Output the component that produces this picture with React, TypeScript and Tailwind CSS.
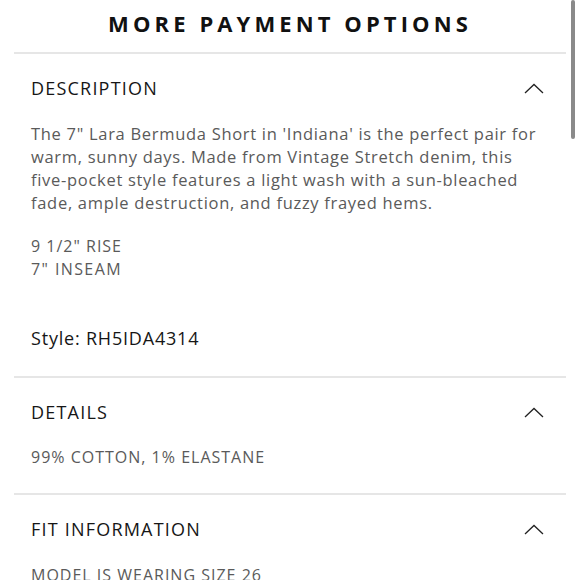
import { ReactNode } from "react";

const Chevron = () => (
  <svg width="20" height="11" viewBox="0 0 20 11" fill="none" className="shrink-0">
    <path d="M1 10L10 1.5L19 10" stroke="#222" strokeWidth="1.3" />
  </svg>
);

type SectionProps = {
  title: string;
  children: ReactNode;
};

const Section = ({ title, children }: SectionProps) => (
  <div className="border-t-2 border-[#e6e6e6] pl-[17px] pr-[22px]">
    <div className="flex items-center justify-between pt-[22px] h-[46px]">
      <h2 className="text-[18px] leading-[24px] text-[#161616] tracking-[1.2px]">{title}</h2>
      <Chevron />
    </div>
    <div className="pt-[22px] text-[16px] leading-[23px] text-[#5a5a5a] tracking-[1px]">{children}</div>
  </div>
);

export default function App() {
  return (
    <div className="relative w-[580px] h-[580px] overflow-hidden bg-white font-['Open_Sans','Liberation_Sans',sans-serif]">
      <div className="px-[14px]">
        <h1 className="h-[52px] flex items-center justify-center text-[22px] font-bold tracking-[4.1px] text-[#111] pb-[6px]">
          MORE PAYMENT OPTIONS
        </h1>

        <Section title="DESCRIPTION">
          <p className="w-[512px] text-[16.5px] tracking-[0.7px]">
            The 7" Lara Bermuda Short in 'Indiana' is the perfect pair for warm, sunny days. Made from Vintage
            Stretch denim, this five-pocket style features a light wash with a sun-bleached fade, ample
            destruction, and fuzzy frayed hems.
          </p>
          <p className="mt-[21px]">
            9 1/2" RISE
            <br />
            <span className="tracking-[1.4px]">7" INSEAM</span>
          </p>
          <p className="mt-[45px] mb-[26px] text-[18px] leading-[24px] text-[#161616] tracking-[0.8px]">
            Style: RH5IDA4314
          </p>
        </Section>

        <Section title="DETAILS">
          <p className="pb-[24px]">99% COTTON, 1% ELASTANE</p>
        </Section>

        <Section title="FIT INFORMATION">
          <p className="pt-[1px]">MODEL IS WEARING SIZE 26</p>
        </Section>
      </div>

      <div className="absolute right-[5px] top-0 w-[4px] h-[139px] rounded-full bg-[#8a8a8a]" />
    </div>
  );
}
